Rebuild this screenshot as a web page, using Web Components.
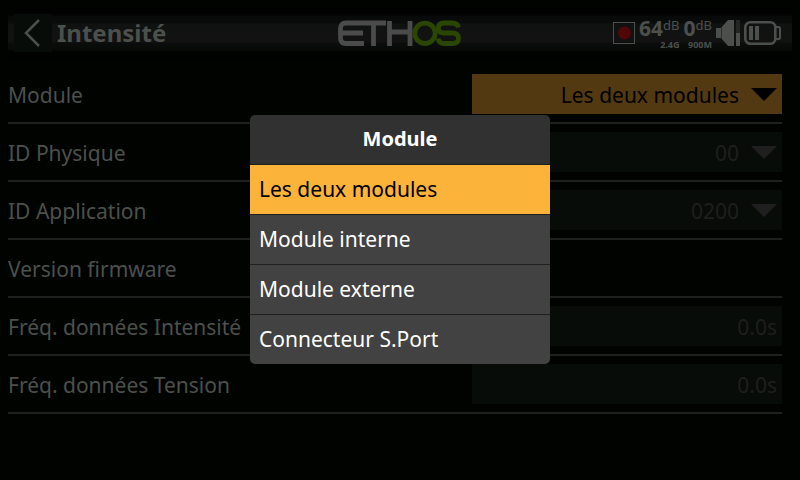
<!DOCTYPE html>
<html lang="fr">
<head>
<meta charset="utf-8">
<title>Intensité</title>
<style>
html, body { height: 100%; }
body {
  margin: 0;
  background: #000300;
  color: #4c504c;
  font-family: "Noto Sans", "Open Sans", sans-serif;
  font-size: 21px;
  --rule: #212020;
  --field: #070c08;
  --value: #1e1f1e;
  --accent: #fcb33a;
  --accent-dim: #523911;
}
</style>
</head>
<body>
<ethos-screen>
  <ethos-topbar slot="top" heading="Intensité"></ethos-topbar>
  <setting-row label="Module" kind="select" value="Les deux modules" active></setting-row>
  <setting-row label="ID Physique" kind="select" value="00"></setting-row>
  <setting-row label="ID Application" kind="select" value="0200"></setting-row>
  <setting-row label="Version firmware" kind="none"></setting-row>
  <setting-row label="Fréq. données Intensité" kind="input" value="0.0s"></setting-row>
  <setting-row label="Fréq. données Tension" kind="input" value="0.0s"></setting-row>
  <choice-dialog slot="overlay" heading="Module">
    <choice-item selected>Les deux modules</choice-item>
    <choice-item>Module interne</choice-item>
    <choice-item>Module externe</choice-item>
    <choice-item>Connecteur S.Port</choice-item>
  </choice-dialog>
</ethos-screen>
<script>
function shadow(host, html) {
  const root = host.attachShadow({ mode: "open" });
  root.innerHTML = html;
  return root;
}

customElements.define("ethos-screen", class extends HTMLElement {
  constructor() {
    super();
    shadow(this, `
      <style>
        :host { display: flex; flex-direction: column; min-height: 100%; }
        main { padding: 0 18px 0 8px; }
      </style>
      <slot name="top"></slot>
      <main><slot></slot></main>
      <slot name="overlay"></slot>`);
  }
});

customElements.define("ethos-logo", class extends HTMLElement {
  constructor() {
    super();
    shadow(this, `
      <style>:host { display: block; } svg { display: block; }</style>
      <svg width="124" height="26" viewBox="0 0 124 26" fill="none" stroke-width="4.800" role="img" aria-label="ETHOS">
        <g stroke="#4b4b4b">
          <path d="M48 3H8Q2.500 3 2.500 8.500V18Q2.500 23.500 8 23.500H26"/>
          <path d="M2 13H25M35.500 3V26M51.500 1V26M72 1V26M51 12H72"/>
        </g>
        <g stroke="#2b4600">
          <circle cx="87" cy="13.300" r="10.200"/>
          <path d="M120.500 7.500Q119.500 3 114 3H106Q100.500 3 100.500 8T106 13H114Q120.500 13 120.500 18.200T114 23.500H106Q101 23.500 100 18.500"/>
        </g>
      </svg>`);
  }
});

customElements.define("radio-level", class extends HTMLElement {
  constructor() {
    super();
    const v = this.getAttribute("value"), b = this.getAttribute("band");
    shadow(this, `
      <style>
        :host { display: flex; flex-direction: column; align-items: flex-end; font-weight: 700; }
        .level { display: flex; align-items: flex-start; line-height: 22px; font-size: 21px; }
        small { font-size: 13px; font-weight: 400; line-height: 16px; }
        .band { font-size: 9px; line-height: 9px; padding-top: 1px; }
      </style>
      <span class="level"><span>${v}</span><small>dB</small></span>
      <span class="band">${b}</span>`);
  }
});

customElements.define("ethos-topbar", class extends HTMLElement {
  constructor() {
    super();
    shadow(this, `
      <style>
        :host { display: block; padding: 8px 8px; }
        header {
          height: 50px; box-sizing: border-box; padding: 0 6px;
          display: grid; grid-template-columns: 1fr auto 1fr; align-items: center;
          background: linear-gradient(#000100 0, #010201 7px, #070a08 8px, #090c0a 15px, #101211 16px, #121212 34px, #0a0d0b 35px, #080a08 42px, #010201 43px, #000200);
        }
        .left { display: flex; align-items: center; gap: 5px; }
        button { width: 38px; height: 38px; padding: 0; border: 0; background: #070c08; color: inherit; display: grid; place-items: center; }
        h1 { margin: 0; font-size: 24px; line-height: 36px; font-weight: 700; }
        .status { display: flex; justify-content: flex-end; align-items: center; gap: 4px; padding-right: 5px; }
        svg { display: block; flex: none; }
      </style>
      <header>
        <div class="left">
          <button type="button" aria-label="Retour">
            <svg width="38" height="38" viewBox="0 0 38 38" fill="none" stroke="currentColor" stroke-width="2.500"><path d="M25 6L12 19L25 32"/></svg>
          </button>
          <h1>${this.getAttribute("heading")}</h1>
        </div>
        <ethos-logo></ethos-logo>
        <div class="status">
          <svg width="22" height="22" viewBox="0 0 22 22" role="img" aria-label="Enregistrement">
            <rect x=".5" y=".5" width="21" height="21" fill="none" stroke="currentColor"/>
            <circle cx="11.500" cy="11" r="6.500" fill="#500708"/>
          </svg>
          <radio-level value="64" band="2.4G"></radio-level>
          <radio-level value="0" band="900M"></radio-level>
          <svg width="24" height="26" viewBox="0 0 24 26" role="img" aria-label="Volume">
            <path d="M0 8H5L12 0H18V26H12L5 18H0z" fill="currentColor"/>
            <path d="M5.500 8V18" stroke="#2c2e2c"/>
            <path d="M20 0h4v13h-4z" fill="#242624"/><path d="M20 13h4v13h-4z" fill="currentColor"/>
          </svg>
          <svg width="37" height="24" viewBox="0 0 37 24" role="img" aria-label="Batterie">
            <rect x="1.300" y="1.300" width="30" height="21.400" rx="5" fill="none" stroke="currentColor" stroke-width="2.600"/>
            <path d="M32 6H34.500Q36 6 36 7.500V16.500Q36 18 34.500 18H32" fill="none" stroke="currentColor" stroke-width="2"/>
            <path d="M5 5h4v14H5zM11 5h4v14h-4z" fill="currentColor"/>
          </svg>
        </div>
      </header>`);
  }
});

customElements.define("setting-row", class extends HTMLElement {
  constructor() {
    super();
    const kind = this.getAttribute("kind");
    const label = this.getAttribute("label");
    const value = this.getAttribute("value");
    const off = this.hasAttribute("active") ? "" : "disabled";
    const control = {
      select: `<div class="pick"><select id="c" ${off}><option>${value}</option></select>
        <svg width="26" height="13" viewBox="0 0 26 13" aria-hidden="true"><path d="M0 0H26L13 13z" fill="currentColor"/></svg></div>`,
      input: `<input id="c" type="text" value="${value}" ${off}>`,
      none: ""
    }[kind];
    shadow(this, `
      <style>
        :host {
          display: grid; grid-template-columns: 1fr 310px; align-items: center;
          height: 40px; padding: 8px 0; border-bottom: 2px solid var(--rule);
          --ink: var(--value); --fill: var(--field);
        }
        :host([active]) { --ink: #000; --fill: var(--accent-dim); }
        label, .label { line-height: 38px; padding-top: 2px; white-space: nowrap; }
        .pick { display: grid; color: var(--ink); }
        .pick > * { grid-area: 1 / 1; }
        svg { justify-self: end; align-self: center; margin-right: 5px; pointer-events: none; }
        select, input {
          appearance: none; box-sizing: border-box; width: 100%; height: 40px; margin: 0; border: 0;
          border-radius: 0; background: var(--fill); color: var(--ink); opacity: 1;
          font: inherit; text-align: right; text-align-last: right; outline: 0;
        }
        select { padding: 2px 43px 0 8px; }
        input { padding: 2px 5px 0 8px; }
      </style>
      ${kind === "none" ? `<span class="label">${label}</span>` : `<label for="c">${label}</label>`}
      ${control}`);
  }
});

customElements.define("choice-item", class extends HTMLElement {
  constructor() {
    super();
    const on = this.hasAttribute("selected");
    shadow(this, `
      <style>
        :host { display: block; border-top: 1px solid #1f1f1f; }
        button {
          display: block; width: 100%; height: 49px; margin: 0; padding: 0 9px; border: 0;
          background: #424242; color: #fff; font: inherit; text-align: left; line-height: 48px;
          padding-bottom: 1px;
        }
        :host([selected]) button { background: var(--accent); color: #000; }
      </style>
      <button type="button" role="option" aria-selected="${on}"><slot></slot></button>`);
  }
});

customElements.define("choice-dialog", class extends HTMLElement {
  constructor() {
    super();
    shadow(this, `
      <style>
        :host { position: fixed; inset: 0; display: grid; place-items: center; padding-bottom: 1px; }
        section { width: 300px; border-radius: 5px; overflow: hidden; }
        h2 { margin: 0; padding-bottom: 2px; font-size: 20px; line-height: 47px; font-weight: 700; text-align: center; color: #fff; background: #313131; }
      </style>
      <section role="dialog" aria-modal="true" aria-labelledby="t">
        <h2 id="t">${this.getAttribute("heading")}</h2>
        <div role="listbox" aria-labelledby="t"><slot></slot></div>
      </section>`);
  }
});
</script>
</body>
</html>
